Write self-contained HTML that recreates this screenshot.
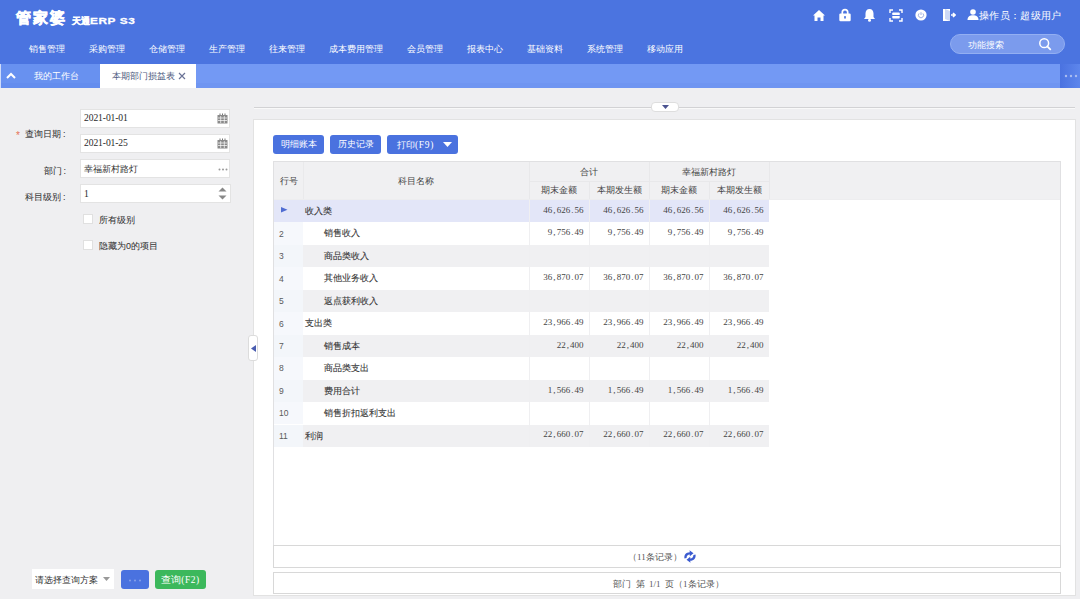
<!DOCTYPE html>
<html><head><meta charset="utf-8">
<style>
*{margin:0;padding:0;box-sizing:border-box;}
html,body{width:1080px;height:599px;overflow:hidden;background:#efeff1;font-family:"Liberation Sans",sans-serif;font-size:10px;color:#333;position:relative;}
.a{position:absolute;white-space:nowrap;}
#hdr{position:absolute;left:0;top:0;width:1080px;height:64px;background:#4b74e0;}
.logo{left:15.5px;top:8.5px;color:#fff;font-weight:bold;font-size:15px;letter-spacing:2.3px;-webkit-text-stroke:0.6px #fff;}
.logo2{left:72px;top:15px;color:#fff;font-weight:bold;font-size:9px;-webkit-text-stroke:0.4px #fff;}
.logo3{left:90px;top:14.5px;color:#fff;font-weight:bold;font-size:10.5px;letter-spacing:0.5px;transform:scale(1.13,0.85);transform-origin:0 50%;-webkit-text-stroke:0.3px #fff;}
.menu{top:42.5px;color:#fff;font-size:9px;}
#tabs{position:absolute;left:0;top:64px;width:1080px;height:24px;background:#7399f4;}
.lbl{font-size:9px;color:#333;-webkit-text-stroke:0.05px #333;}
.inp{position:absolute;background:#fff;border:1px solid #e3e3e3;font-size:8px;color:#333;padding-left:3px;}
.mono{font-family:"Liberation Mono",monospace;}
.numt{display:inline-block;font-family:"Liberation Serif",serif;font-size:9px;color:#444;}
.numt i{display:inline-block;font-style:normal;width:4.48px;text-align:center;}
.dt{font-family:"Liberation Serif",serif !important;font-size:9.6px;letter-spacing:-0.1px;color:#2a2a2a;}
.btn{position:absolute;background:#4a72df;border-radius:3px;color:#fff;font-size:9px;text-align:center;}
.chk{position:absolute;width:10px;height:10px;background:#fff;border:1px solid #e0e0e0;}
#panel{position:absolute;left:253px;top:119px;width:823px;height:477px;background:#fff;border:1px solid #e2e2e2;}
#grid{position:absolute;left:273px;top:161px;width:788px;height:385px;border:1px solid #e0e0e2;background:#fff;}
.row{position:absolute;left:0;width:495px;height:22.4px;}
.cell{position:absolute;top:0;height:100%;font-size:10px;}
.num{font-family:"Liberation Mono",monospace;font-size:7.6px;text-align:right;padding-right:4px;}
</style></head><body>
<div id="hdr">
  <div class="a logo">管家婆</div>
  <div class="a logo2">天通</div><div class="a logo3">ERP S3</div>
  <div class="a menu" style="left:29px">销售管理</div>
  <div class="a menu" style="left:89px">采购管理</div>
  <div class="a menu" style="left:149px">仓储管理</div>
  <div class="a menu" style="left:209px">生产管理</div>
  <div class="a menu" style="left:269px">往来管理</div>
  <div class="a menu" style="left:329px">成本费用管理</div>
  <div class="a menu" style="left:407px">会员管理</div>
  <div class="a menu" style="left:467px">报表中心</div>
  <div class="a menu" style="left:527px">基础资料</div>
  <div class="a menu" style="left:587px">系统管理</div>
  <div class="a menu" style="left:647px">移动应用</div>
  <!-- icons -->
  <svg class="a" style="left:812px;top:9px" width="14" height="13" viewBox="0 0 14 13"><path d="M7 1 L13 6.5 L11.5 6.5 L11.5 12 L8.5 12 L8.5 8.5 L5.5 8.5 L5.5 12 L2.5 12 L2.5 6.5 L1 6.5 Z" fill="#fff"/></svg>
  <svg class="a" style="left:838px;top:8px" width="14" height="14" viewBox="0 0 14 14"><path d="M4.3 6 V4.3 A2.7 2.7 0 0 1 9.7 4.3 V6" stroke="#fff" stroke-width="1.7" fill="none"/><rect x="1.3" y="5.6" width="11.4" height="7.6" rx="1.2" fill="#fff"/><circle cx="7" cy="9" r="1" fill="#4b74e0"/><path d="M7 9 V11" stroke="#4b74e0" stroke-width="0.9"/></svg>
  <svg class="a" style="left:863px;top:8px" width="13" height="14" viewBox="0 0 13 14"><path d="M6.5 1 C9 1 10.5 3 10.5 5.5 V9 L12 11 H1 L2.5 9 V5.5 C2.5 3 4 1 6.5 1 Z" fill="#fff"/><circle cx="6.5" cy="12.3" r="1.5" fill="#fff"/></svg>
  <svg class="a" style="left:889px;top:9px" width="14" height="13" viewBox="0 0 14 13"><path d="M1 4 V1 H4 M10 1 H13 V4 M13 9 V12 H10 M4 12 H1 V9" stroke="#fff" stroke-width="1.4" fill="none"/><rect x="3.3" y="3.5" width="7.4" height="6" rx="0.8" fill="#fff"/><path d="M3 6.5 H11" stroke="#4b74e0" stroke-width="1"/></svg>
  <svg class="a" style="left:915px;top:9px" width="12" height="12" viewBox="0 0 12 12"><circle cx="6" cy="6" r="5.6" fill="#fff"/><path d="M4.1 4.4 A2.6 2.6 0 1 0 7.9 4.4" stroke="#9fb0e0" stroke-width="1" fill="none"/><path d="M6 3.2 V6" stroke="#9fb0e0" stroke-width="1"/></svg>
  <svg class="a" style="left:942px;top:8px" width="14" height="14" viewBox="0 0 14 14"><path d="M1 1 H8 V13 H1 Z" fill="#fff"/><path d="M3 1 L8 3 V13 L3 11 Z" fill="#ccd8f6"/><path d="M9 7 H13 M11 5 L13 7 L11 9" stroke="#fff" stroke-width="1.6" fill="none"/></svg>
  <svg class="a" style="left:967px;top:9px" width="12" height="11" viewBox="0 0 12 11"><circle cx="6" cy="3" r="2.8" fill="#fff"/><path d="M0.5 11 C0.5 7.5 3 6.2 6 6.2 C9 6.2 11.5 7.5 11.5 11 Z" fill="#fff"/></svg>
  <div class="a" style="left:979px;top:8.5px;color:#fff;font-size:10.4px;letter-spacing:0.35px;">操作员：超级用户</div>
  <div class="a" style="left:950px;top:34px;width:115px;height:20px;border-radius:10px;background:#7b9bed;border:1px solid #93aff2;"></div>
  <div class="a" style="left:968px;top:39px;color:#fff;font-size:9px;">功能搜索</div>
  <svg class="a" style="left:1038px;top:37px" width="14" height="14" viewBox="0 0 14 14"><circle cx="6.2" cy="6.2" r="4.4" stroke="#fff" stroke-width="1.5" fill="none"/><path d="M9.3 9.3 L12.3 12.3" stroke="#fff" stroke-width="1.8" stroke-linecap="round"/></svg>
</div>
<div id="tabs">
  <div class="a" style="left:0;top:0;width:100px;height:24px;background:#6891f0;"></div><div class="a" style="left:0;top:0;width:1px;height:24px;background:#cfdcfa;"></div><div class="a" style="left:1px;top:19px;width:1079px;height:5px;background:rgba(60,100,220,0.08);"></div>
  <svg class="a" style="left:6px;top:8px" width="10" height="7" viewBox="0 0 10 7"><path d="M1 6 L5 2 L9 6" stroke="#fff" stroke-width="2" fill="none"/></svg>
  <div class="a" style="left:34px;top:5.7px;color:#fff;font-size:9px;">我的工作台</div>
  <div class="a" style="left:100px;top:0;width:96px;height:24px;background:#fff;"></div>
  <div class="a" style="left:111.5px;top:6px;color:#4d5a80;font-size:9px;">本期部门损益表</div>
  <svg class="a" style="left:178px;top:8px" width="8" height="8" viewBox="0 0 8 8"><path d="M1 1 L7 7 M7 1 L1 7" stroke="#6a7396" stroke-width="1.2"/></svg>
  <div class="a" style="left:1060px;top:0;width:20px;height:24px;background:linear-gradient(90deg,#4a72e0,#5d86ec);"></div>
  <svg class="a" style="left:1064px;top:10px" width="14" height="4" viewBox="0 0 14 4"><circle cx="2" cy="2" r="1.2" fill="#a9bdf0"/><circle cx="7" cy="2" r="1.2" fill="#a9bdf0"/><circle cx="12" cy="2" r="1.2" fill="#a9bdf0"/></svg>
</div>

<!-- left panel -->
<div class="a" style="left:16px;top:129.5px;color:#e57355;font-size:10px;">*</div>
<div class="a lbl" style="left:25px;top:127.5px;">查询日期<span style="margin-left:2px">:</span></div>
<div class="inp" style="left:80px;top:109px;width:150px;height:19px;"><span class="a mono dt" style="left:3px;top:2.2px;">2021-01-01</span><svg class="a" style="left:136px;top:3px" width="11" height="11" viewBox="0 0 11 11"><path d="M3 0.5 V2 M5.5 0.5 V2 M8 0.5 V2" stroke="#777" stroke-width="1"/><rect x="0.5" y="2" width="10" height="8.5" fill="#8a8a8a"/><path d="M1 5 H10 M1 7.5 H10 M3.7 3 V10 M7.3 3 V10" stroke="#fff" stroke-width="0.7"/></svg></div>
<div class="inp" style="left:80px;top:134px;width:150px;height:19px;"><span class="a mono dt" style="left:3px;top:2.2px;">2021-01-25</span><svg class="a" style="left:136px;top:3px" width="11" height="11" viewBox="0 0 11 11"><path d="M3 0.5 V2 M5.5 0.5 V2 M8 0.5 V2" stroke="#777" stroke-width="1"/><rect x="0.5" y="2" width="10" height="8.5" fill="#8a8a8a"/><path d="M1 5 H10 M1 7.5 H10 M3.7 3 V10 M7.3 3 V10" stroke="#fff" stroke-width="0.7"/></svg></div>
<div class="a lbl" style="left:43.5px;top:165px;">部门<span style="margin-left:2px">:</span></div>
<div class="inp" style="left:80px;top:159px;width:150px;height:19px;"><span class="a" style="left:3px;top:3px;font-size:9px;">幸福新村路灯</span><svg class="a" style="left:137px;top:8px" width="10" height="3" viewBox="0 0 10 3"><circle cx="1.5" cy="1.5" r="1" fill="#999"/><circle cx="5" cy="1.5" r="1" fill="#999"/><circle cx="8.5" cy="1.5" r="1" fill="#999"/></svg></div>
<div class="a lbl" style="left:25px;top:190.5px;">科目级别<span style="margin-left:2px">:</span></div>
<div class="inp" style="left:80px;top:184px;width:151px;height:19px;"><span class="a mono dt" style="left:3px;top:3.2px;">1</span><svg class="a" style="left:137px;top:2px" width="9" height="13" viewBox="0 0 9 13"><path d="M0.5 4.5 L4.5 0.5 L8.5 4.5 Z M0.5 8.5 H8.5 L4.5 12.5 Z" fill="#888"/></svg></div>
<div class="chk" style="left:83px;top:214px;"></div>
<div class="a lbl" style="left:99px;top:213.5px;">所有级别</div>
<div class="chk" style="left:83px;top:240px;"></div>
<div class="a lbl" style="left:99px;top:239.5px;">隐藏为0的项目</div>

<div class="a" style="left:32px;top:569px;width:82px;height:20px;background:#fff;"></div>
<div class="a" style="left:35px;top:574px;font-size:9px;color:#333;">请选择查询方案</div>
<svg class="a" style="left:103px;top:577px" width="7" height="5" viewBox="0 0 7 5"><path d="M0 0 H7 L3.5 4 Z" fill="#999"/></svg>
<div class="btn" style="left:121px;top:570px;width:28px;height:19px;"><svg class="a" style="left:7px;top:9px" width="14" height="3" viewBox="0 0 14 3"><circle cx="2" cy="1.5" r="0.9" fill="#8ea6ea"/><circle cx="7" cy="1.5" r="0.9" fill="#8ea6ea"/><circle cx="12" cy="1.5" r="0.9" fill="#8ea6ea"/></svg></div>
<div class="btn" style="left:155px;top:570px;width:51px;height:19px;background:#3cb85c;font-size:9.5px;line-height:19px;">查询<span style="font-family:'Liberation Serif',serif;font-size:9.5px;letter-spacing:0.5px;">(F2)</span></div>

<!-- handles -->
<div class="a" style="left:254px;top:107px;width:821px;height:1px;background:#d2d2d4;"></div><div class="a" style="left:254px;top:108px;width:821px;height:1px;background:#f9f9f9;"></div>
<div class="a" style="left:651px;top:102px;width:28px;height:10px;border-radius:4px;background:#fff;border:1px solid #dedede;"></div>
<svg class="a" style="left:662px;top:105px" width="7" height="5" viewBox="0 0 7 5"><path d="M0 0 H7 L3.5 4 Z" fill="#4b5390"/></svg>

<div id="panel"></div>
<div class="a" style="left:248px;top:335px;width:10px;height:26px;border-radius:3px;background:#fff;border:1px solid #dcdcdc;"></div>
<svg class="a" style="left:251px;top:345px" width="5" height="7" viewBox="0 0 5 7"><path d="M5 0 V7 L0 3.5 Z" fill="#4a5db0"/></svg>

<div class="btn" style="left:273px;top:135px;width:51px;height:19px;line-height:19px;">明细账本</div>
<div class="btn" style="left:330px;top:135px;width:51px;height:19px;line-height:19px;">历史记录</div>
<div class="btn" style="left:387px;top:135px;width:71px;height:19px;"><span class="a" style="left:10px;top:4px;">打印<span style="font-family:'Liberation Serif',serif;font-size:9.5px;letter-spacing:0.7px;">(F9)</span></span><svg class="a" style="left:56px;top:7px" width="9" height="6" viewBox="0 0 9 6"><path d="M0 0 H9 L4.5 5 Z" fill="#fff"/></svg></div>

<div id="grid"></div>
<!--TBL-->
<div class="a" style="left:274px;top:162px;width:786px;height:38px;background:#f0f0f2;"></div>
<div class="a" style="left:303px;top:162px;width:1px;height:38px;background:#e9e9eb;"></div>
<div class="a" style="left:529px;top:162px;width:1px;height:38px;background:#e8e8ea;"></div>
<div class="a" style="left:649px;top:162px;width:1px;height:38px;background:#e8e8ea;"></div>
<div class="a" style="left:769px;top:162px;width:1px;height:38px;background:#e8e8ea;"></div>
<div class="a" style="left:529px;top:181px;width:240px;height:1px;background:#e8e8ea;"></div>
<div class="a" style="left:589px;top:181px;width:1px;height:19px;background:#e8e8ea;"></div>
<div class="a" style="left:709px;top:181px;width:1px;height:19px;background:#e8e8ea;"></div>
<div class="a" style="left:274px;top:199px;width:786px;height:1px;background:#ededef;"></div>
<div class="a" style="left:280px;top:175px;font-size:9px;color:#444;">行号</div>
<div class="a" style="left:303px;top:175px;width:226px;text-align:center;font-size:9px;color:#444;">科目名称</div>
<div class="a" style="left:529px;top:166px;width:120px;text-align:center;font-size:9px;color:#444;">合计</div>
<div class="a" style="left:649px;top:166px;width:120px;text-align:center;font-size:9px;color:#444;">幸福新村路灯</div>
<div class="a" style="left:529px;top:184px;width:60px;text-align:center;font-size:9px;color:#444;">期末金额</div>
<div class="a" style="left:589px;top:184px;width:60px;text-align:center;font-size:9px;color:#444;">本期发生额</div>
<div class="a" style="left:649px;top:184px;width:60px;text-align:center;font-size:9px;color:#444;">期末金额</div>
<div class="a" style="left:709px;top:184px;width:60px;text-align:center;font-size:9px;color:#444;">本期发生额</div>
<div class="a" style="left:274px;top:200.0px;width:495px;height:22.45px;background:#e3e6f8;"></div>
<div class="a" style="left:274px;top:200.0px;width:29px;height:22.45px;background:#e3e6f8;"></div>
<svg class="a" style="left:281px;top:207.4px" width="6.5" height="5.5" viewBox="0 0 6.5 5.5"><path d="M0 0 L6.5 2.75 L0 5.5 Z" fill="#4f6cd2"/></svg>
<div class="a" style="left:305px;top:205.0px;font-size:9px;color:#363636;-webkit-text-stroke:0.1px #363636;">收入类</div>
<div class="a" style="left:529px;top:203.9px;width:60px;text-align:right;padding-right:5.5px;"><span class="numt"><i>4</i><i>6</i><i>,</i><i>6</i><i>2</i><i>6</i><i>.</i><i>5</i><i>6</i></span></div>
<div class="a" style="left:589px;top:203.9px;width:60px;text-align:right;padding-right:5.5px;"><span class="numt"><i>4</i><i>6</i><i>,</i><i>6</i><i>2</i><i>6</i><i>.</i><i>5</i><i>6</i></span></div>
<div class="a" style="left:649px;top:203.9px;width:60px;text-align:right;padding-right:5.5px;"><span class="numt"><i>4</i><i>6</i><i>,</i><i>6</i><i>2</i><i>6</i><i>.</i><i>5</i><i>6</i></span></div>
<div class="a" style="left:709px;top:203.9px;width:60px;text-align:right;padding-right:5.5px;"><span class="numt"><i>4</i><i>6</i><i>,</i><i>6</i><i>2</i><i>6</i><i>.</i><i>5</i><i>6</i></span></div>
<div class="a" style="left:274px;top:222.4px;width:495px;height:22.45px;background:#ffffff;"></div>
<div class="a" style="left:274px;top:222.4px;width:29px;height:22.45px;background:#f6f8fc;"></div>
<div class="a" style="left:279px;top:228.8px;font-size:8.5px;color:#5a5a5a;">2</div>
<div class="a" style="left:324px;top:227.4px;font-size:9px;color:#363636;-webkit-text-stroke:0.1px #363636;">销售收入</div>
<div class="a" style="left:529px;top:226.3px;width:60px;text-align:right;padding-right:5.5px;"><span class="numt"><i>9</i><i>,</i><i>7</i><i>5</i><i>6</i><i>.</i><i>4</i><i>9</i></span></div>
<div class="a" style="left:589px;top:226.3px;width:60px;text-align:right;padding-right:5.5px;"><span class="numt"><i>9</i><i>,</i><i>7</i><i>5</i><i>6</i><i>.</i><i>4</i><i>9</i></span></div>
<div class="a" style="left:649px;top:226.3px;width:60px;text-align:right;padding-right:5.5px;"><span class="numt"><i>9</i><i>,</i><i>7</i><i>5</i><i>6</i><i>.</i><i>4</i><i>9</i></span></div>
<div class="a" style="left:709px;top:226.3px;width:60px;text-align:right;padding-right:5.5px;"><span class="numt"><i>9</i><i>,</i><i>7</i><i>5</i><i>6</i><i>.</i><i>4</i><i>9</i></span></div>
<div class="a" style="left:274px;top:244.9px;width:495px;height:22.45px;background:#f0f0f2;"></div>
<div class="a" style="left:274px;top:244.9px;width:29px;height:22.45px;background:#f3f6fa;"></div>
<div class="a" style="left:279px;top:251.2px;font-size:8.5px;color:#5a5a5a;">3</div>
<div class="a" style="left:324px;top:249.9px;font-size:9px;color:#363636;-webkit-text-stroke:0.1px #363636;">商品类收入</div>
<div class="a" style="left:274px;top:267.4px;width:495px;height:22.45px;background:#ffffff;"></div>
<div class="a" style="left:274px;top:267.4px;width:29px;height:22.45px;background:#f6f8fc;"></div>
<div class="a" style="left:279px;top:273.7px;font-size:8.5px;color:#5a5a5a;">4</div>
<div class="a" style="left:324px;top:272.4px;font-size:9px;color:#363636;-webkit-text-stroke:0.1px #363636;">其他业务收入</div>
<div class="a" style="left:529px;top:271.2px;width:60px;text-align:right;padding-right:5.5px;"><span class="numt"><i>3</i><i>6</i><i>,</i><i>8</i><i>7</i><i>0</i><i>.</i><i>0</i><i>7</i></span></div>
<div class="a" style="left:589px;top:271.2px;width:60px;text-align:right;padding-right:5.5px;"><span class="numt"><i>3</i><i>6</i><i>,</i><i>8</i><i>7</i><i>0</i><i>.</i><i>0</i><i>7</i></span></div>
<div class="a" style="left:649px;top:271.2px;width:60px;text-align:right;padding-right:5.5px;"><span class="numt"><i>3</i><i>6</i><i>,</i><i>8</i><i>7</i><i>0</i><i>.</i><i>0</i><i>7</i></span></div>
<div class="a" style="left:709px;top:271.2px;width:60px;text-align:right;padding-right:5.5px;"><span class="numt"><i>3</i><i>6</i><i>,</i><i>8</i><i>7</i><i>0</i><i>.</i><i>0</i><i>7</i></span></div>
<div class="a" style="left:274px;top:289.8px;width:495px;height:22.45px;background:#f0f0f2;"></div>
<div class="a" style="left:274px;top:289.8px;width:29px;height:22.45px;background:#f3f6fa;"></div>
<div class="a" style="left:279px;top:296.1px;font-size:8.5px;color:#5a5a5a;">5</div>
<div class="a" style="left:324px;top:294.8px;font-size:9px;color:#363636;-webkit-text-stroke:0.1px #363636;">返点获利收入</div>
<div class="a" style="left:274px;top:312.2px;width:495px;height:22.45px;background:#ffffff;"></div>
<div class="a" style="left:274px;top:312.2px;width:29px;height:22.45px;background:#f6f8fc;"></div>
<div class="a" style="left:279px;top:318.6px;font-size:8.5px;color:#5a5a5a;">6</div>
<div class="a" style="left:305px;top:317.2px;font-size:9px;color:#363636;-webkit-text-stroke:0.1px #363636;">支出类</div>
<div class="a" style="left:529px;top:316.1px;width:60px;text-align:right;padding-right:5.5px;"><span class="numt"><i>2</i><i>3</i><i>,</i><i>9</i><i>6</i><i>6</i><i>.</i><i>4</i><i>9</i></span></div>
<div class="a" style="left:589px;top:316.1px;width:60px;text-align:right;padding-right:5.5px;"><span class="numt"><i>2</i><i>3</i><i>,</i><i>9</i><i>6</i><i>6</i><i>.</i><i>4</i><i>9</i></span></div>
<div class="a" style="left:649px;top:316.1px;width:60px;text-align:right;padding-right:5.5px;"><span class="numt"><i>2</i><i>3</i><i>,</i><i>9</i><i>6</i><i>6</i><i>.</i><i>4</i><i>9</i></span></div>
<div class="a" style="left:709px;top:316.1px;width:60px;text-align:right;padding-right:5.5px;"><span class="numt"><i>2</i><i>3</i><i>,</i><i>9</i><i>6</i><i>6</i><i>.</i><i>4</i><i>9</i></span></div>
<div class="a" style="left:274px;top:334.7px;width:495px;height:22.45px;background:#f0f0f2;"></div>
<div class="a" style="left:274px;top:334.7px;width:29px;height:22.45px;background:#f3f6fa;"></div>
<div class="a" style="left:279px;top:341.0px;font-size:8.5px;color:#5a5a5a;">7</div>
<div class="a" style="left:324px;top:339.7px;font-size:9px;color:#363636;-webkit-text-stroke:0.1px #363636;">销售成本</div>
<div class="a" style="left:529px;top:338.6px;width:60px;text-align:right;padding-right:5.5px;"><span class="numt"><i>2</i><i>2</i><i>,</i><i>4</i><i>0</i><i>0</i></span></div>
<div class="a" style="left:589px;top:338.6px;width:60px;text-align:right;padding-right:5.5px;"><span class="numt"><i>2</i><i>2</i><i>,</i><i>4</i><i>0</i><i>0</i></span></div>
<div class="a" style="left:649px;top:338.6px;width:60px;text-align:right;padding-right:5.5px;"><span class="numt"><i>2</i><i>2</i><i>,</i><i>4</i><i>0</i><i>0</i></span></div>
<div class="a" style="left:709px;top:338.6px;width:60px;text-align:right;padding-right:5.5px;"><span class="numt"><i>2</i><i>2</i><i>,</i><i>4</i><i>0</i><i>0</i></span></div>
<div class="a" style="left:274px;top:357.1px;width:495px;height:22.45px;background:#ffffff;"></div>
<div class="a" style="left:274px;top:357.1px;width:29px;height:22.45px;background:#f6f8fc;"></div>
<div class="a" style="left:279px;top:363.4px;font-size:8.5px;color:#5a5a5a;">8</div>
<div class="a" style="left:324px;top:362.1px;font-size:9px;color:#363636;-webkit-text-stroke:0.1px #363636;">商品类支出</div>
<div class="a" style="left:274px;top:379.6px;width:495px;height:22.45px;background:#f0f0f2;"></div>
<div class="a" style="left:274px;top:379.6px;width:29px;height:22.45px;background:#f3f6fa;"></div>
<div class="a" style="left:279px;top:385.9px;font-size:8.5px;color:#5a5a5a;">9</div>
<div class="a" style="left:324px;top:384.6px;font-size:9px;color:#363636;-webkit-text-stroke:0.1px #363636;">费用合计</div>
<div class="a" style="left:529px;top:383.5px;width:60px;text-align:right;padding-right:5.5px;"><span class="numt"><i>1</i><i>,</i><i>5</i><i>6</i><i>6</i><i>.</i><i>4</i><i>9</i></span></div>
<div class="a" style="left:589px;top:383.5px;width:60px;text-align:right;padding-right:5.5px;"><span class="numt"><i>1</i><i>,</i><i>5</i><i>6</i><i>6</i><i>.</i><i>4</i><i>9</i></span></div>
<div class="a" style="left:649px;top:383.5px;width:60px;text-align:right;padding-right:5.5px;"><span class="numt"><i>1</i><i>,</i><i>5</i><i>6</i><i>6</i><i>.</i><i>4</i><i>9</i></span></div>
<div class="a" style="left:709px;top:383.5px;width:60px;text-align:right;padding-right:5.5px;"><span class="numt"><i>1</i><i>,</i><i>5</i><i>6</i><i>6</i><i>.</i><i>4</i><i>9</i></span></div>
<div class="a" style="left:274px;top:402.0px;width:495px;height:22.45px;background:#ffffff;"></div>
<div class="a" style="left:274px;top:402.0px;width:29px;height:22.45px;background:#f6f8fc;"></div>
<div class="a" style="left:279px;top:408.3px;font-size:8.5px;color:#5a5a5a;">10</div>
<div class="a" style="left:324px;top:407.0px;font-size:9px;color:#363636;-webkit-text-stroke:0.1px #363636;">销售折扣返利支出</div>
<div class="a" style="left:274px;top:424.5px;width:495px;height:22.45px;background:#f0f0f2;"></div>
<div class="a" style="left:274px;top:424.5px;width:29px;height:22.45px;background:#f3f6fa;"></div>
<div class="a" style="left:279px;top:430.8px;font-size:8.5px;color:#5a5a5a;">11</div>
<div class="a" style="left:305px;top:429.5px;font-size:9px;color:#363636;-webkit-text-stroke:0.1px #363636;">利润</div>
<div class="a" style="left:529px;top:428.4px;width:60px;text-align:right;padding-right:5.5px;"><span class="numt"><i>2</i><i>2</i><i>,</i><i>6</i><i>6</i><i>0</i><i>.</i><i>0</i><i>7</i></span></div>
<div class="a" style="left:589px;top:428.4px;width:60px;text-align:right;padding-right:5.5px;"><span class="numt"><i>2</i><i>2</i><i>,</i><i>6</i><i>6</i><i>0</i><i>.</i><i>0</i><i>7</i></span></div>
<div class="a" style="left:649px;top:428.4px;width:60px;text-align:right;padding-right:5.5px;"><span class="numt"><i>2</i><i>2</i><i>,</i><i>6</i><i>6</i><i>0</i><i>.</i><i>0</i><i>7</i></span></div>
<div class="a" style="left:709px;top:428.4px;width:60px;text-align:right;padding-right:5.5px;"><span class="numt"><i>2</i><i>2</i><i>,</i><i>6</i><i>6</i><i>0</i><i>.</i><i>0</i><i>7</i></span></div>
<div class="a" style="left:529px;top:200px;width:1px;height:246.9px;background:#efeff1;"></div>
<div class="a" style="left:589px;top:200px;width:1px;height:246.9px;background:#efeff1;"></div>
<div class="a" style="left:649px;top:200px;width:1px;height:246.9px;background:#efeff1;"></div>
<div class="a" style="left:709px;top:200px;width:1px;height:246.9px;background:#efeff1;"></div>
<div class="a" style="left:273px;top:545px;width:788px;height:23px;border:1px solid #d8d8d8;background:#fff;"></div>
<div class="a" style="left:628px;top:550.5px;font-size:9px;color:#555;">（<span style="font-family:'Liberation Serif',serif">11</span>条记录）</div>
<svg class="a" style="left:683px;top:550px" width="14" height="13" viewBox="0 0 14 13"><path d="M1.5 8.5 C0.8 5 3 2.2 6.8 2.2 L6.5 0.2 L10.5 3.2 L6.8 6.2 L6.8 4.6 C4.8 4.6 3.5 6 3.6 8 Z" fill="#3b5bd0"/><path d="M12.5 4.5 C13.2 8 11 10.8 7.2 10.8 L7.5 12.8 L3.5 9.8 L7.2 6.8 L7.2 8.4 C9.2 8.4 10.5 7 10.4 5 Z" fill="#3b5bd0"/></svg>
<div class="a" style="left:273px;top:572px;width:788px;height:22px;border:1px solid #d8d8d8;background:#fff;"></div>
<div class="a" style="left:613px;top:577.5px;font-size:9px;color:#555;word-spacing:2px;">部门 第 <span style="font-family:'Liberation Serif',serif">1/1</span> 页（<span style="font-family:'Liberation Serif',serif">1</span>条记录）</div>
<!--/TBL-->
</body></html>
